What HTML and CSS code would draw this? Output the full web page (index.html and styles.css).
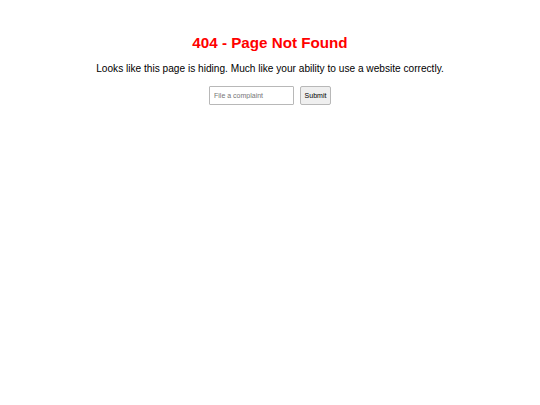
FILE: index.html
```html
<!DOCTYPE html>
<html>
<head>
<meta charset="utf-8">
<link rel="stylesheet" href="styles.css">
</head>
<body>
<main class="page">
  <h1 class="title">404 - Page Not Found</h1>
  <p class="message">Looks like this page is hiding. Much like your ability to use a website correctly.</p>
  <form class="complaint">
    <input class="complaint-input" type="text" placeholder="File a complaint">
    <button class="complaint-btn" type="button">Submit</button>
  </form>
</main>
</body>
</html>
```
FILE: styles.css
```css
html, body {
  margin: 0;
  padding: 0;
  background: #fff;
}
body {
  font-family: "Liberation Sans", Arial, sans-serif;
  color: #000;
}
.page {
  display: flex;
  flex-direction: column;
  align-items: center;
  padding-top: 34px;
}
.title {
  margin: 0;
  font-size: 15.2px;
  line-height: 18px;
  font-weight: bold;
  color: #ff0000;
}
.message {
  margin: 10px 0 0;
  font-size: 10.15px;
  line-height: 14px;
}
.complaint {
  display: flex;
  gap: 6px;
  margin-top: 10px;
}
.complaint-input {
  box-sizing: border-box;
  width: 85px;
  height: 19px;
  padding: 0 4px;
  border: 1px solid #b8b8b8;
  border-radius: 1px;
  font-family: "Liberation Sans", Arial, sans-serif;
  font-size: 7px;
  color: #000;
  outline: none;
}
.complaint-input::placeholder {
  color: #757575;
}
.complaint-btn {
  box-sizing: border-box;
  width: 31px;
  height: 19px;
  padding: 0;
  border: 1px solid #b8b8b8;
  border-radius: 2px;
  background: #efefef;
  font-family: "Liberation Sans", Arial, sans-serif;
  font-size: 7px;
  color: #000;
}
```
